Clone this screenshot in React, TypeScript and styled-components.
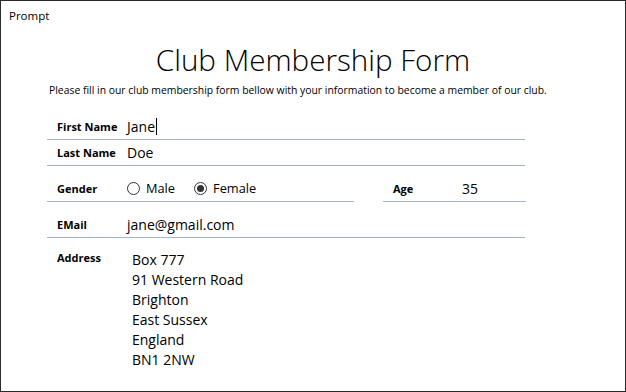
import * as React from 'react';
import styled, { createGlobalStyle } from 'styled-components';

const GlobalStyle = createGlobalStyle`
  html, body {
    margin: 0;
    padding: 0;
    background: #ffffff;
  }
  body {
    font-family: 'Open Sans', 'Noto Sans', sans-serif;
    color: #000;
  }
`;

const Window = styled.div`
  box-sizing: border-box;
  width: 626px;
  height: 392px;
  border: 1px solid #2b2b2b;
  background: #fff;
  overflow: hidden;
`;

const TitleBar = styled.div`
  height: 30px;
  padding: 8px 0 0 8px;
  box-sizing: border-box;
  font-size: 11.5px;
  line-height: 14px;
`;

const Heading = styled.h1`
  margin: 9px 0 0;
  text-align: center;
  font-size: 29.6px;
  line-height: 40px;
  font-weight: 300;
`;

const Intro = styled.p`
  margin: 3px 0 0 48px;
  font-size: 10.4px;
  line-height: 14px;
`;

const Form = styled.div`
  width: 478px;
  margin: 12px 0 0 46px;
  display: flex;
  flex-direction: column;
`;

// every field sits 13px above its underline, as in the original layout
const Row = styled.div<{ $height: number }>`
  box-sizing: border-box;
  display: flex;
  align-items: center;
  height: ${p => p.$height}px;
  padding-top: ${p => p.$height - 27}px;
  border-bottom: 1px solid #a3b5cc;
`;

const SplitRow = styled.div`
  display: flex;
  gap: 29px;
`;

const Cell = styled(Row)<{ $width: number }>`
  width: ${p => p.$width}px;
  flex: none;
`;

const Label = styled.div<{ $width?: number }>`
  width: ${p => p.$width ?? 70}px;
  padding-left: 10px;
  font-size: 11px;
  font-weight: 700;
  flex: none;
`;

const Value = styled.div`
  font-size: 14px;
  display: flex;
  align-items: center;
`;

const Caret = styled.span`
  display: inline-block;
  width: 1px;
  height: 17px;
  background: #000;
  margin-left: 1px;
`;

const RadioGroup = styled.div`
  display: flex;
  align-items: center;
  gap: 19px;
  font-size: 12.8px;
`;

const RadioOption = styled.label`
  display: flex;
  align-items: center;
  gap: 6px;
`;

const RadioCircle = styled.span<{ $checked?: boolean }>`
  box-sizing: border-box;
  width: 13px;
  height: 13px;
  border: 1px solid #333;
  border-radius: 50%;
  display: flex;
  align-items: center;
  justify-content: center;
  &::after {
    content: '';
    width: 7px;
    height: 7px;
    border-radius: 50%;
    background: ${p => (p.$checked ? '#333' : 'transparent')};
  }
`;

const AddressRow = styled.div`
  display: flex;
  padding-top: 12px;
`;

const AddressLines = styled.div`
  margin-left: 1px;
  font-size: 14px;
  line-height: 20px;
`;

const address = ['Box 777', '91 Western Road', 'Brighton', 'East Sussex', 'England', 'BN1 2NW'];

export default function App() {
  return (
    <Window>
      <GlobalStyle />
      <TitleBar>Prompt</TitleBar>
      <Heading>Club Membership Form</Heading>
      <Intro>
        Please fill in our club membership form bellow with your information to become a member of our club.
      </Intro>
      <Form>
        <Row $height={31}>
          <Label>First Name</Label>
          <Value>
            Jane
            <Caret />
          </Value>
        </Row>
        <Row $height={26}>
          <Label>Last Name</Label>
          <Value>Doe</Value>
        </Row>
        <SplitRow>
          <Cell $height={36} $width={307}>
            <Label>Gender</Label>
            <RadioGroup>
              <RadioOption>
                <RadioCircle />
                Male
              </RadioOption>
              <RadioOption>
                <RadioCircle $checked />
                Female
              </RadioOption>
            </RadioGroup>
          </Cell>
          <Cell $height={36} $width={143}>
            <Label $width={69}>Age</Label>
            <Value>35</Value>
          </Cell>
        </SplitRow>
        <Row $height={36}>
          <Label>EMail</Label>
          <Value>jane@gmail.com</Value>
        </Row>
        <AddressRow>
          <Label $width={74}>Address</Label>
          <AddressLines>
            {address.map(line => (
              <div key={line}>{line}</div>
            ))}
          </AddressLines>
        </AddressRow>
      </Form>
    </Window>
  );
}
